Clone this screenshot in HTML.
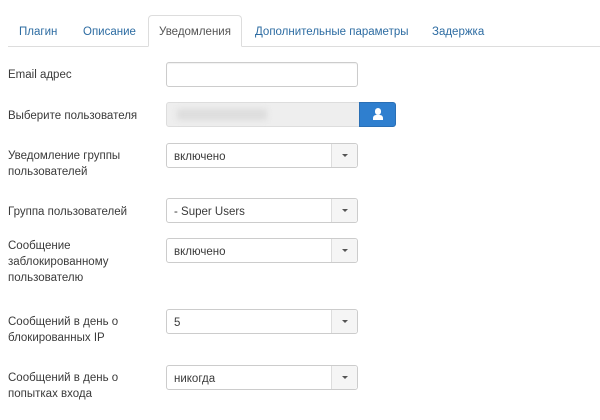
<!DOCTYPE html>
<html><head><meta charset="utf-8"><style>
*{box-sizing:border-box;margin:0;padding:0}
body{width:600px;height:420px;background:#fff;font-family:"Liberation Sans",Arial,sans-serif;font-size:11.5px;color:#3a3a3a;position:relative;overflow:hidden}
.tabs{position:absolute;left:8px;top:46px;width:592px;border-top:1px solid #ddd}
.tab{position:absolute;font-size:11.5px;color:#2d6ca2;line-height:14px}
.act{position:absolute;left:148px;top:15px;width:94px;height:32px;border:1px solid #ddd;border-bottom:1px solid #fff;border-radius:4px 4px 0 0;background:#fff;color:#555;text-align:center;padding-top:10px}
.lbl{position:absolute;left:8px;line-height:16px}
.inp{position:absolute;left:166px;width:192px;height:25px;border:1px solid #ccc;border-radius:3px;background:#fff;box-shadow:inset 0 1px 1px rgba(0,0,0,.06)}
.sel{position:absolute;left:166px;width:192px;height:25px;border:1px solid #ccc;border-radius:3px;background:#fff;padding:7px 0 0 7px;line-height:12px}
.sel .b{position:absolute;right:0;top:0;width:26px;height:23px;border-left:1px solid #ddd;background:#f5f5f5;border-radius:0 3px 3px 0}
.sel .b:after{content:"";position:absolute;left:10px;top:10px;border-left:3px solid transparent;border-right:3px solid transparent;border-top:3px solid #555}
</style></head><body>
<div class="tabs"></div>
<div class="tab" style="left:19px;top:25px">Плагин</div>
<div class="tab" style="left:83px;top:25px">Описание</div>
<div class="act">Уведомления</div>
<div class="tab" style="left:255px;top:25px">Дополнительные параметры</div>
<div class="tab" style="left:432px;top:25px">Задержка</div>

<div class="lbl" style="top:67px">Email адрес</div>
<div class="inp" style="top:62px"></div>

<div class="lbl" style="top:108px">Выберите пользователя</div>
<div style="position:absolute;left:166px;top:102px;width:194px;height:25px;background:#eee;border:1px solid #ddd;border-radius:3px 0 0 3px"><div style="position:absolute;left:10px;top:6px;width:90px;height:11px;background:#ddd;filter:blur(3px)"></div></div>
<div style="position:absolute;left:359px;top:102px;width:37px;height:25px;background:#2f7fcf;border:1px solid #2a6fb5;border-radius:0 3px 3px 0">
<div style="position:absolute;left:15px;top:5px;width:6px;height:7px;border-radius:3px;background:#fff"></div>
<div style="position:absolute;left:13px;top:12px;width:10px;height:5px;border-radius:3px 3px 0 0;background:#fff"></div></div>

<div class="lbl" style="top:148px">Уведомление группы<br>пользователей</div>
<div class="sel" style="top:143px">включено<div class="b"></div></div>

<div class="lbl" style="top:204px">Группа пользователей</div>
<div class="sel" style="top:198px">- Super Users<div class="b"></div></div>

<div class="lbl" style="top:238px">Сообщение<br>заблокированному<br>пользователю</div>
<div class="sel" style="top:238px">включено<div class="b"></div></div>

<div class="lbl" style="top:314px">Сообщений в день о<br>блокированных IP</div>
<div class="sel" style="top:309px">5<div class="b"></div></div>

<div class="lbl" style="top:370px">Сообщений в день о<br>попытках входа</div>
<div class="sel" style="top:365px">никогда<div class="b"></div></div>
</body></html>
